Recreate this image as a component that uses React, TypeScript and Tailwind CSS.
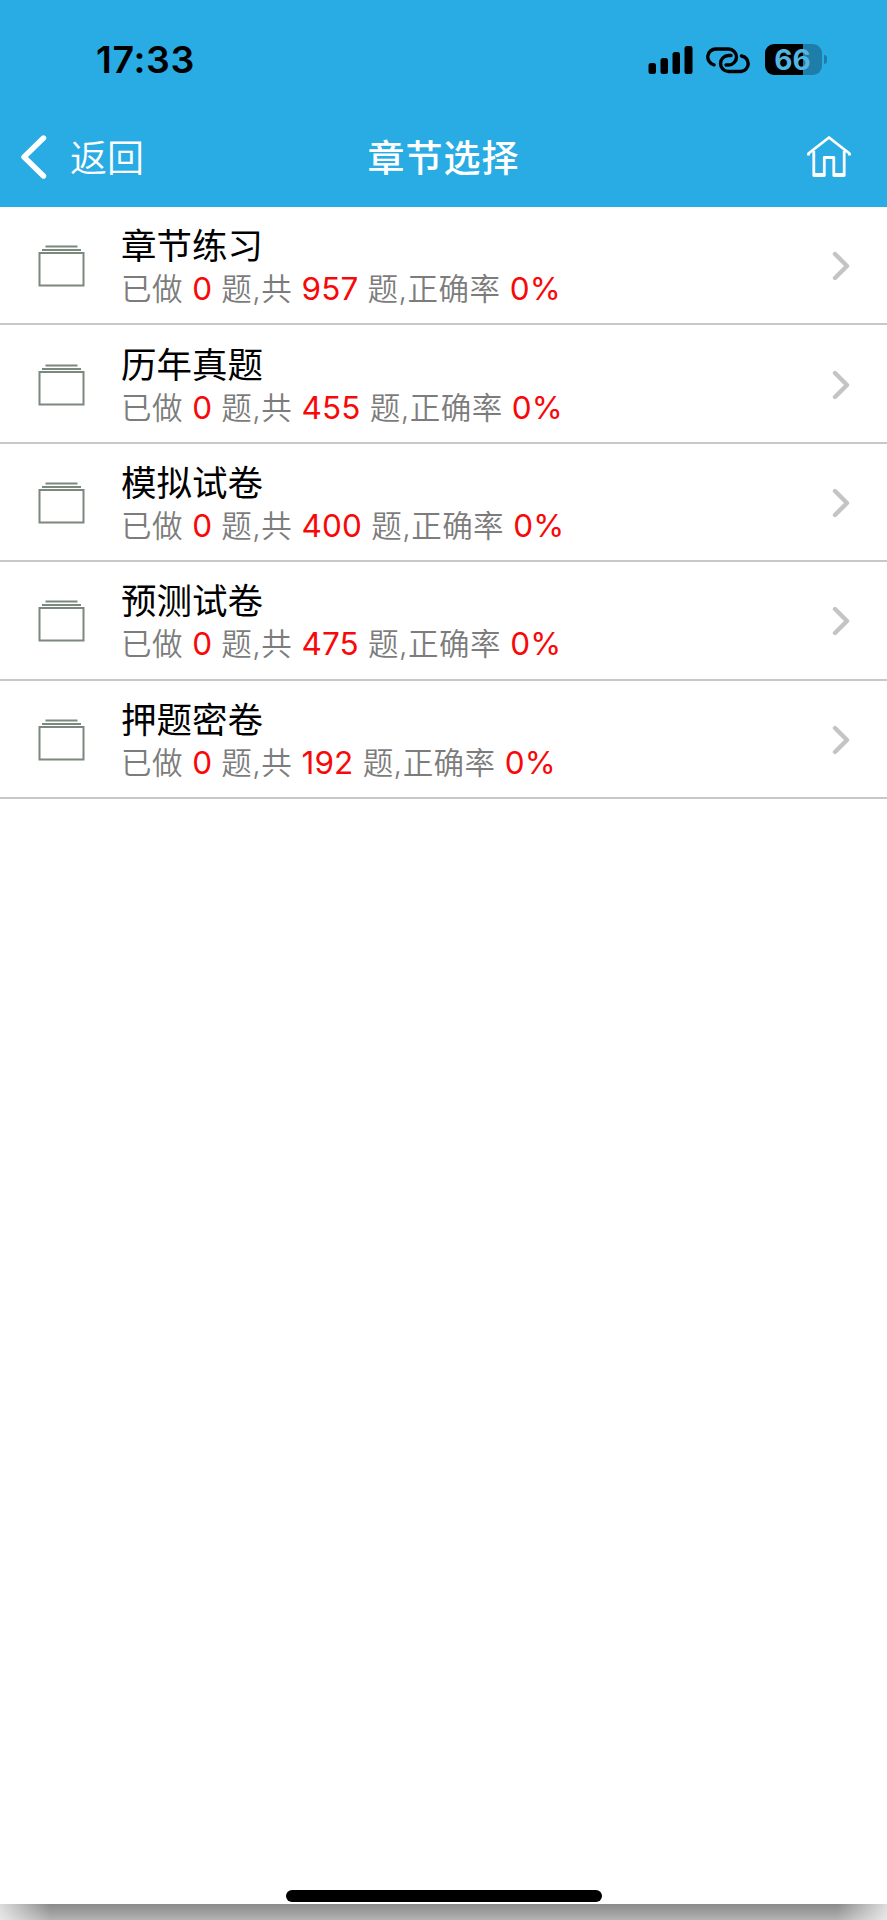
type Chapter = {
  title: string;
  done: number;
  total: number;
  rate: string;
};

const chapters: Chapter[] = [
  { title: "章节练习", done: 0, total: 957, rate: "0%" },
  { title: "历年真题", done: 0, total: 455, rate: "0%" },
  { title: "模拟试卷", done: 0, total: 400, rate: "0%" },
  { title: "预测试卷", done: 0, total: 475, rate: "0%" },
  { title: "押题密卷", done: 0, total: 192, rate: "0%" },
];

function StatusBar() {
  return (
    <div className="flex h-[118px] items-center justify-between pl-[96px] pr-[60px] pt-px">
      <span className="text-[37.5px] font-semibold leading-none tracking-[0.6px] text-black">
        17:33
      </span>
      <div className="flex items-center">
        <svg width="45" height="30" viewBox="0 0 45 30" className="mr-[13px]">
          <rect x="0.5" y="18" width="7.5" height="11" rx="2.5" />
          <rect x="12.5" y="13" width="7.5" height="16" rx="2.5" />
          <rect x="24.5" y="7" width="7.5" height="22" rx="2.5" />
          <rect x="36.5" y="1" width="8" height="28" rx="2.5" />
        </svg>
        <svg
          width="45"
          height="28"
          viewBox="0 0 45 28"
          fill="none"
          stroke="#000"
          strokeWidth="3.4"
          strokeLinecap="round"
          className="mr-[14px]"
        >
          <path d="M8 18.8A8 8 0 0 1 10 3H22.5A8 8 0 0 1 22.5 19H20" />
          <path d="M35.5 10A7.8 7.8 0 0 1 35 25.5H22.5A8 8 0 0 1 22.5 9.5H25" />
        </svg>
        <div className="flex items-center">
          <div className="flex h-[31px] w-[57px] items-center justify-center overflow-hidden rounded-[9px] bg-[linear-gradient(90deg,#000_67%,#1f7ea9_67%)]">
            <span className="pr-[2px] text-[28px] font-bold leading-none text-[#52b5e2]">
              66
            </span>
          </div>
          <div className="ml-[2px] h-[9px] w-[3px] rounded-r-full bg-[#1f7ea9]" />
        </div>
      </div>
    </div>
  );
}

function NavBar() {
  return (
    <div className="grid h-[89px] grid-cols-3 items-center pb-[11px] text-white">
      <div className="flex items-center pl-[19px]">
        <svg
          width="28"
          height="46"
          viewBox="0 0 28 46"
          fill="none"
          stroke="currentColor"
          strokeWidth="5.4"
          strokeLinecap="round"
          strokeLinejoin="round"
        >
          <path d="M24.5 4L5 23L24.5 42" />
        </svg>
        <span className="ml-[23px] pt-[2px] text-[37px] font-[350] leading-none">
          返回
        </span>
      </div>
      <h1 className="pt-[2px] text-center text-[37px] font-medium leading-none tracking-[1px]">
        章节选择
      </h1>
      <div className="flex justify-end pr-[36px]">
        <svg
          width="44"
          height="44"
          viewBox="0 0 44 44"
          fill="none"
          stroke="currentColor"
          strokeWidth="2.8"
          strokeLinejoin="round"
        >
          <path d="M1.5 20.5V18.5L22 2.5L42.5 18.5V20.5M6.8 16V40.5H17.3V22.5H26.8V40.5H37.2V16" />
          <path d="M6.8 39.5H17.3M26.8 39.5H37.2" />
        </svg>
      </div>
    </div>
  );
}

function Count({ value }: { value: number | string }) {
  return (
    <b className="text-[31.5px] font-normal tracking-[0.1px] text-[#f80808]">
      {value}
    </b>
  );
}

function ChapterRow({ title, done, total, rate }: Chapter) {
  return (
    <li className="flex h-[118.4px] items-center border-b-2 border-[#c8c8c8] pl-[38px] pr-[37px] pt-[2px]">
      <svg
        width="47"
        height="42"
        viewBox="0 0 47 42"
        fill="none"
        stroke="#7b887d"
        strokeWidth="2"
      >
        <path d="M7.5 1.5H39.5M4 5H43" />
        <rect x="1.5" y="8" width="44" height="32.5" />
      </svg>
      <div className="ml-[36px] flex-1 pt-[4px]">
        <p className="text-[35.5px] leading-[42px] text-black">{title}</p>
        <p className="text-[30.5px] font-[350] leading-[42px] tracking-[0.45px] text-[#7c7c7c] [word-spacing:0.2px]">
          已做 <Count value={done} /> 题,共 <Count value={total} /> 题,正确率{" "}
          <Count value={rate} />
        </p>
      </div>
      <svg
        width="18"
        height="30"
        viewBox="0 0 18 30"
        fill="none"
        stroke="#c4c4c4"
        strokeWidth="4.4"
        strokeLinecap="round"
        strokeLinejoin="round"
      >
        <path d="M3 3L15 15L3 27" />
      </svg>
    </li>
  );
}

export default function App() {
  return (
    <div className="flex h-[1920px] w-[887px] flex-col bg-white font-['Inter','Noto_Sans_CJK_SC',sans-serif]">
      <header className="bg-[#29abe4]">
        <StatusBar />
        <NavBar />
      </header>
      <main className="flex-1">
        <ul>
          {chapters.map((chapter) => (
            <ChapterRow key={chapter.title} {...chapter} />
          ))}
        </ul>
      </main>
      <div className="mx-auto mb-[2px] h-[12px] w-[316px] rounded-full bg-black" />
      <div className="flex h-[16px] bg-linear-to-b from-[#8a8a8a] to-[#b3b3b3]">
        <div className="w-[50px] bg-linear-to-r from-white/70 to-transparent" />
        <div className="flex-1" />
        <div className="w-[50px] bg-linear-to-l from-white/70 to-transparent" />
      </div>
    </div>
  );
}
